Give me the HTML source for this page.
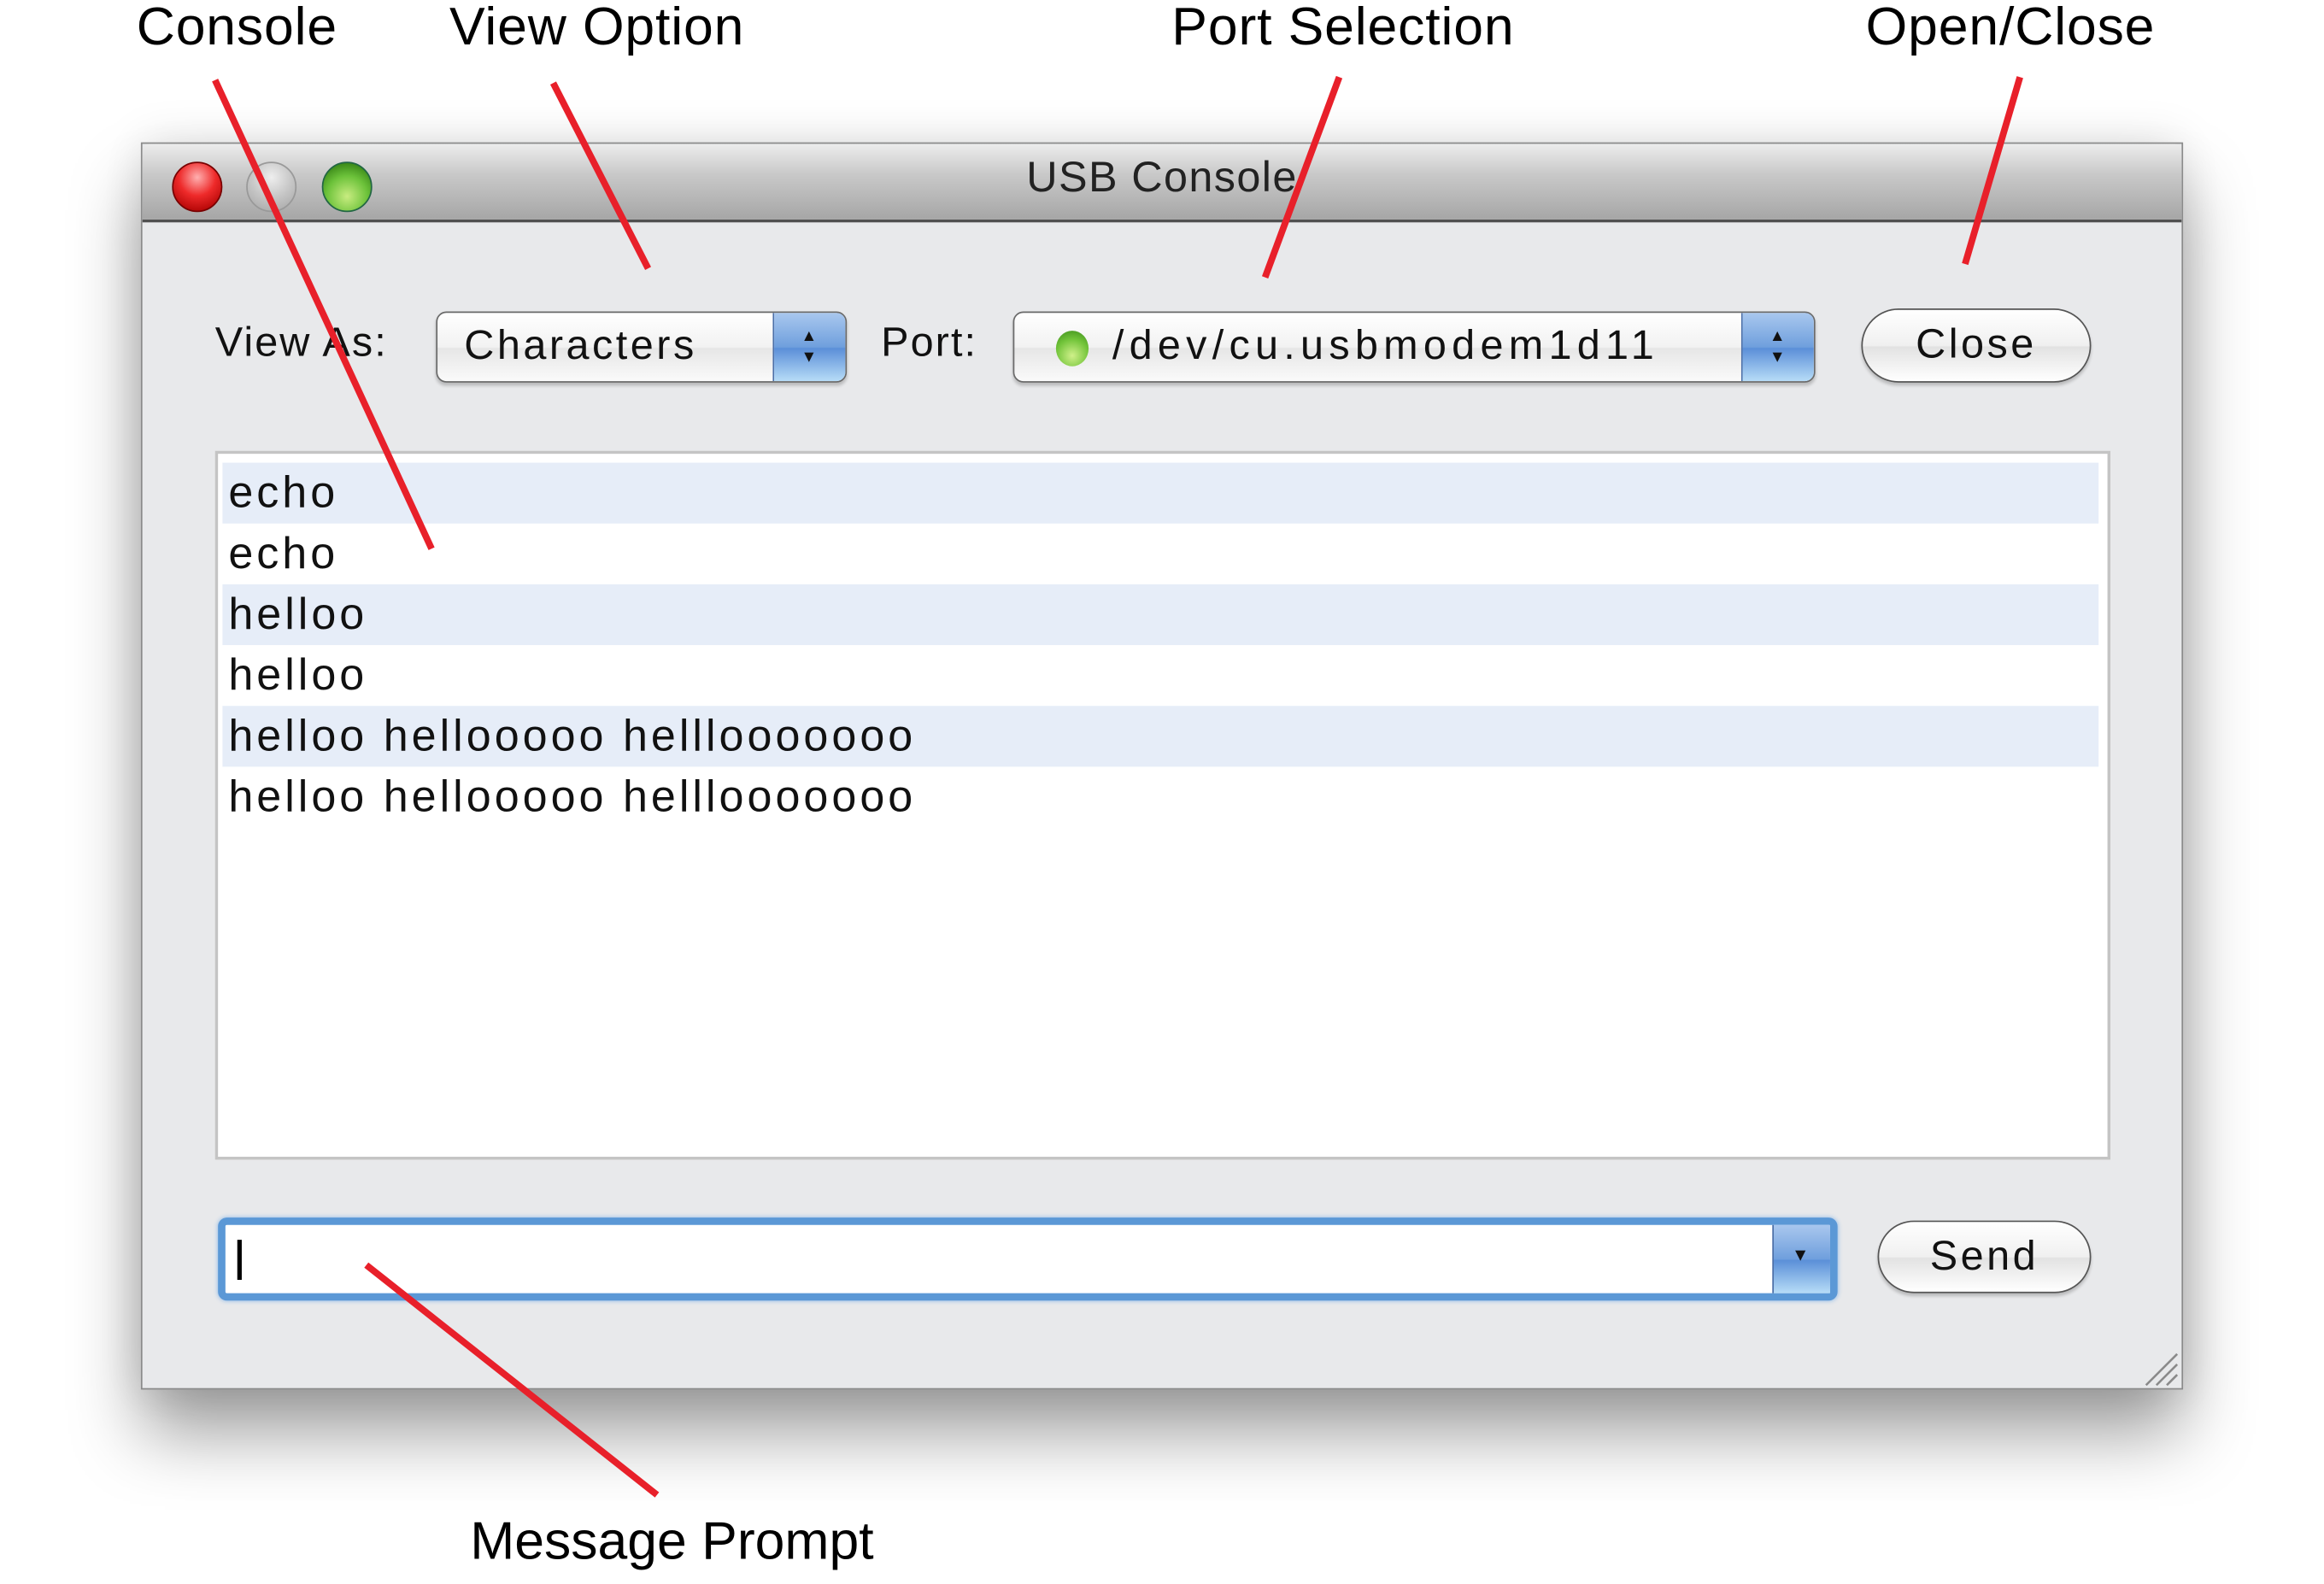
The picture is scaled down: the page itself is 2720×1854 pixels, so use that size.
<!DOCTYPE html>
<html><head><meta charset="utf-8"><style>
html,body{margin:0;padding:0;background:#fff;width:2720px;height:1854px;overflow:hidden}
#s{position:absolute;left:0;top:0;width:1567px;height:1068px;transform:scale(1.7358);transform-origin:0 0;font-family:"Liberation Sans",sans-serif;color:#111}
.a{position:absolute;font-size:36px;white-space:nowrap;color:#000;letter-spacing:0.5px}
.win{position:absolute;left:95px;top:96px;width:1377px;height:841px;background:#e8e9eb;border:1px solid #8a8a8a;box-sizing:border-box;box-shadow:0 30px 45px rgba(0,0,0,.38),0 0 30px rgba(0,0,0,.12)}
.tb{position:absolute;left:0;top:0;right:0;height:51px;background:linear-gradient(#ececec,#c9c9c9 40%,#a6a6a6);border-bottom:2px solid #505050;border-radius:5px 5px 0 0}
.tl{position:absolute;top:12px;width:32px;height:32px;border-radius:50%}
.t{position:absolute;font-size:28px;white-space:nowrap}
.pop{position:absolute;height:48px;border:1.5px solid #6a6a6a;border-radius:7px;background:linear-gradient(#fff,#f2f2f2 50%,#e6e6e6 52%,#fafafa);box-sizing:border-box;box-shadow:0 2px 2px rgba(0,0,0,.2)}
.arr{position:absolute;right:0;top:0;bottom:0;width:48px;background:linear-gradient(#a9c7ee,#6f9fdd 50%,#5b8fd8 52%,#b7dcf7);border-left:1px solid #4b6fa8;border-radius:0 6px 6px 0}
.btn{position:absolute;border:1.5px solid #555;border-radius:26px;background:linear-gradient(#fff,#f0f0f0 50%,#e2e2e2 52%,#fff);box-sizing:border-box;box-shadow:0 2px 2px rgba(0,0,0,.2);text-align:center;font-size:28px;letter-spacing:2px}
.row{position:absolute;left:150px;width:1265px;height:41px;font-size:30px;line-height:41px;padding-left:4px;box-sizing:border-box;white-space:nowrap;letter-spacing:2.3px}
.st{background:#e6edf8}
</style></head><body><div id="s">
<div class="win">
 <div class="tb">
  <div class="tl" style="left:20px;background:radial-gradient(circle at 50% 30%,#ffb0b0,#ee2a2a 45%,#a00 90%);border:1px solid #700"></div>
  <div class="tl" style="left:70px;background:radial-gradient(circle at 50% 30%,#eee,#c6c6c6 50%,#aaa 90%);border:1px solid #999"></div>
  <div class="tl" style="left:121px;background:radial-gradient(circle at 50% 70%,#c8ec80,#6cc23a 50%,#2e7a10 90%);border:1px solid #264"></div>
  <div class="t" style="left:0;right:0;top:7px;text-align:center;font-size:29px;color:#222;letter-spacing:0.8px">USB Console</div>
 </div>
</div>
<div class="t" style="left:145px;top:215px;letter-spacing:1.2px">View As:</div>
<div class="pop" style="left:294px;top:210px;width:277px"><div class="t" style="left:18px;top:6px;letter-spacing:2px">Characters</div><div class="arr"><div style="position:absolute;left:18px;top:9px;font-size:11px;line-height:14px;color:#111">▲<br>▼</div></div></div>
<div class="t" style="left:594px;top:215px;letter-spacing:1.2px">Port:</div>
<div class="pop" style="left:683px;top:210px;width:541px"><div style="position:absolute;left:28px;top:12px;width:22px;height:24px;border-radius:50%;background:radial-gradient(circle at 50% 70%,#d0f08a,#72c43a 55%,#3a8a1a)"></div><div class="t" style="left:66px;top:6px;letter-spacing:3.6px">/dev/cu.usbmodem1d11</div><div class="arr"><div style="position:absolute;left:18px;top:9px;font-size:11px;line-height:14px;color:#111">▲<br>▼</div></div></div>
<div class="btn" style="left:1255px;top:208px;width:155px;height:50px;line-height:46px">Close</div>
<div style="position:absolute;left:145px;top:304px;width:1278px;height:478px;background:#fff;border:2px solid #c4c4c4;box-sizing:border-box"></div>
<div class="row st" style="top:312px">echo</div>
<div class="row" style="top:353px">echo</div>
<div class="row st" style="top:394px">helloo</div>
<div class="row" style="top:435px">helloo</div>
<div class="row st" style="top:476px">helloo hellooooo helllooooooo</div>
<div class="row" style="top:517px">helloo hellooooo helllooooooo</div>
<div style="position:absolute;left:147px;top:821px;width:1092px;height:56px;border:5px solid #5b98d6;border-radius:6px;background:#fff;box-sizing:border-box;box-shadow:0 0 3px #8bb8e8">
 <div style="position:absolute;left:8px;top:10px;width:3px;height:27px;background:#000"></div>
 <div style="position:absolute;right:0;top:0;bottom:0;width:38px;background:linear-gradient(#a9c7ee,#6f9fdd 50%,#5b8fd8 52%,#b7dcf7);border-left:1px solid #4b6fa8"><div style="position:absolute;left:12px;top:13px;font-size:12px;color:#111">▼</div></div>
</div>
<div class="btn" style="left:1266px;top:823px;width:144px;height:49px;line-height:45px">Send</div>
<svg style="position:absolute;left:0;top:0" width="1567" height="1068">
 <g stroke="#8a8a8a" stroke-width="1.5"><line x1="1447" y1="934" x2="1468" y2="913"/><line x1="1454" y1="934" x2="1468" y2="920"/><line x1="1461" y1="934" x2="1468" y2="927"/></g>
 <g stroke="#e8202a" stroke-width="4.5" stroke-linecap="butt">
  <line x1="145" y1="54" x2="291" y2="370"/>
  <line x1="373" y1="56" x2="437" y2="181"/>
  <line x1="903" y1="52" x2="853" y2="187"/>
  <line x1="1362" y1="52" x2="1325" y2="178"/>
  <line x1="247" y1="853" x2="443" y2="1008"/>
 </g>
</svg>
<div class="a" style="left:92px;top:-3px">Console</div>
<div class="a" style="left:303px;top:-3px">View Option</div>
<div class="a" style="left:790px;top:-3px">Port Selection</div>
<div class="a" style="left:1258px;top:-3px">Open/Close</div>
<div class="a" style="left:317px;top:1018px;letter-spacing:0">Message Prompt</div>
</div></body></html>
